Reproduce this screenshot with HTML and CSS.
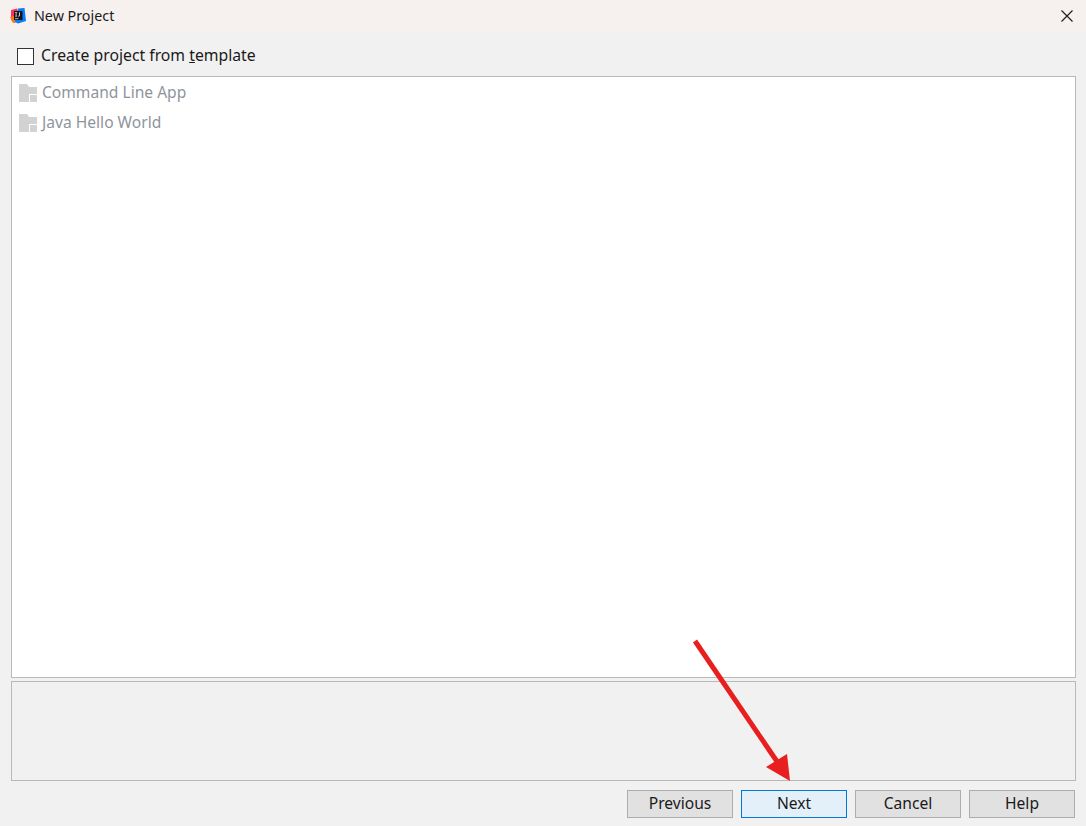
FILE: index.html
```html
<!DOCTYPE html>
<html lang="en">
<head>
<meta charset="utf-8">
<title>New Project</title>
<link rel="stylesheet" href="styles.css">
</head>
<body>
<div class="dialog">
  <header class="titlebar">
    <svg class="app-icon" width="16" height="16" viewBox="0 0 16 16">
      <path d="M1 2 L7 0.5 L9 8 L5 15 L1 12 Z" fill="#fe315d"/>
      <path d="M0 9 L4 8 L6 14 L3 15 Z" fill="#f97a12"/>
      <path d="M8 0.5 L14.5 0 L16 13 L8 15.5 L5 14 Z" fill="#087cfa"/>
      <rect x="4" y="3" width="8.5" height="9" fill="#14131a"/>
      <rect x="5" y="10.3" width="3.4" height="0.8" fill="#ddd"/>
      <path d="M5 4.3h2.2v.8h-.7v2.7h.7v.8H5v-.8h.7V5.100h-.7z M9 4.300h.9v3.300q0 1-1.100 1h-.8v-.8h.7q.3 0 .3-.3z" fill="#ddd"/>
    </svg>
    <span class="title">New Project</span>
    <svg class="close" width="12" height="12" viewBox="0 0 12 12">
      <path d="M0.5 0.500 L11.500 11.500 M11.500 0.500 L0.500 11.500" stroke="#1a1a1a" stroke-width="1.100" fill="none"/>
    </svg>
  </header>
  <div class="content">
    <label class="template-row">
      <span class="checkbox"></span>
      <span class="template-label">Create project from <u>t</u>emplate</span>
    </label>
    <ul class="list">
      <li class="item">
        <svg class="folder" width="19" height="18" viewBox="0 0 19 18">
          <path d="M0 0h8l2 3h8v7H10v8H0z" fill="#d2d2d2"/>
          <rect x="11" y="11" width="7" height="7" fill="#d2d2d2"/>
        </svg>
        <span>Command Line App</span>
      </li>
      <li class="item">
        <svg class="folder" width="19" height="18" viewBox="0 0 19 18">
          <path d="M0 0h8l2 3h8v7H10v8H0z" fill="#d2d2d2"/>
          <rect x="11" y="11" width="7" height="7" fill="#d2d2d2"/>
        </svg>
        <span>Java Hello World</span>
      </li>
    </ul>
    <div class="description"></div>
    <footer class="buttons">
      <button class="btn">Previous</button>
      <button class="btn btn-default">Next</button>
      <button class="btn">Cancel</button>
      <button class="btn">Help</button>
    </footer>
  </div>
  <svg class="arrow" width="1086" height="826" viewBox="0 0 1086 826">
    <path d="M695 641 L778 763" stroke="#e81f1f" stroke-width="5" fill="none"/>
    <path d="M790 781 L766 767 L787 754 Z" fill="#e81f1f"/>
  </svg>
</div>
</body>
</html>
```
FILE: styles.css
```css
* { box-sizing: border-box; }
html, body { margin: 0; padding: 0; }
body {
  width: 1086px;
  height: 826px;
  overflow: hidden;
  background: #f1f1f1;
  font-family: "Noto Sans", "Open Sans", sans-serif;
  font-size: 15.6px;
  color: #1a1a1a;
}
.dialog { position: relative; width: 1086px; height: 826px; display: flex; flex-direction: column; }
.titlebar {
  height: 33px;
  background: #f6f0ef;
  display: flex;
  align-items: center;
  padding: 0 13px 2px 10px;
  flex: none;
}
.app-icon { flex: none; }
.title { margin-left: 8px; font-size: 14.300px; flex: 1; }
.close { flex: none; }
.content {
  flex: 1;
  display: flex;
  flex-direction: column;
  padding: 0 10px 8px 11px;
}
.template-row { height: 43px; display: flex; align-items: center; padding-left: 6px; gap: 7px; flex: none; }
.template-label { font-size: 15.750px; }
.checkbox { width: 17px; height: 17px; margin-top: 4px; border: 1px solid #333; background: #fff; flex: none; }
.list {
  list-style: none;
  margin: 0;
  padding: 0;
  height: 602px;
  flex: none;
  background: #fff;
  border: 1px solid #b9b9b9;
  color: #8f949c;
}
.item { height: 30px; display: flex; align-items: center; padding-left: 7px; gap: 4px; }
.folder { flex: none; margin-top: 1px; }
.description { height: 100px; margin-top: 3px; flex: none; border: 1px solid #b9b9b9; background: #f1f1f1; }
.buttons { display: flex; justify-content: flex-end; gap: 8px; margin-top: 9px; padding-right: 1px; }
.btn {
  width: 106px;
  height: 28px;
  padding: 0 0 2px;
  border: 1px solid #adadad;
  background: #e1e1e1;
  font: inherit;
  color: #1a1a1a;
}
.btn-default { background: #e3f0fa; border-color: #0078d7; }
.arrow { position: absolute; left: 0; top: 0; pointer-events: none; }
```
